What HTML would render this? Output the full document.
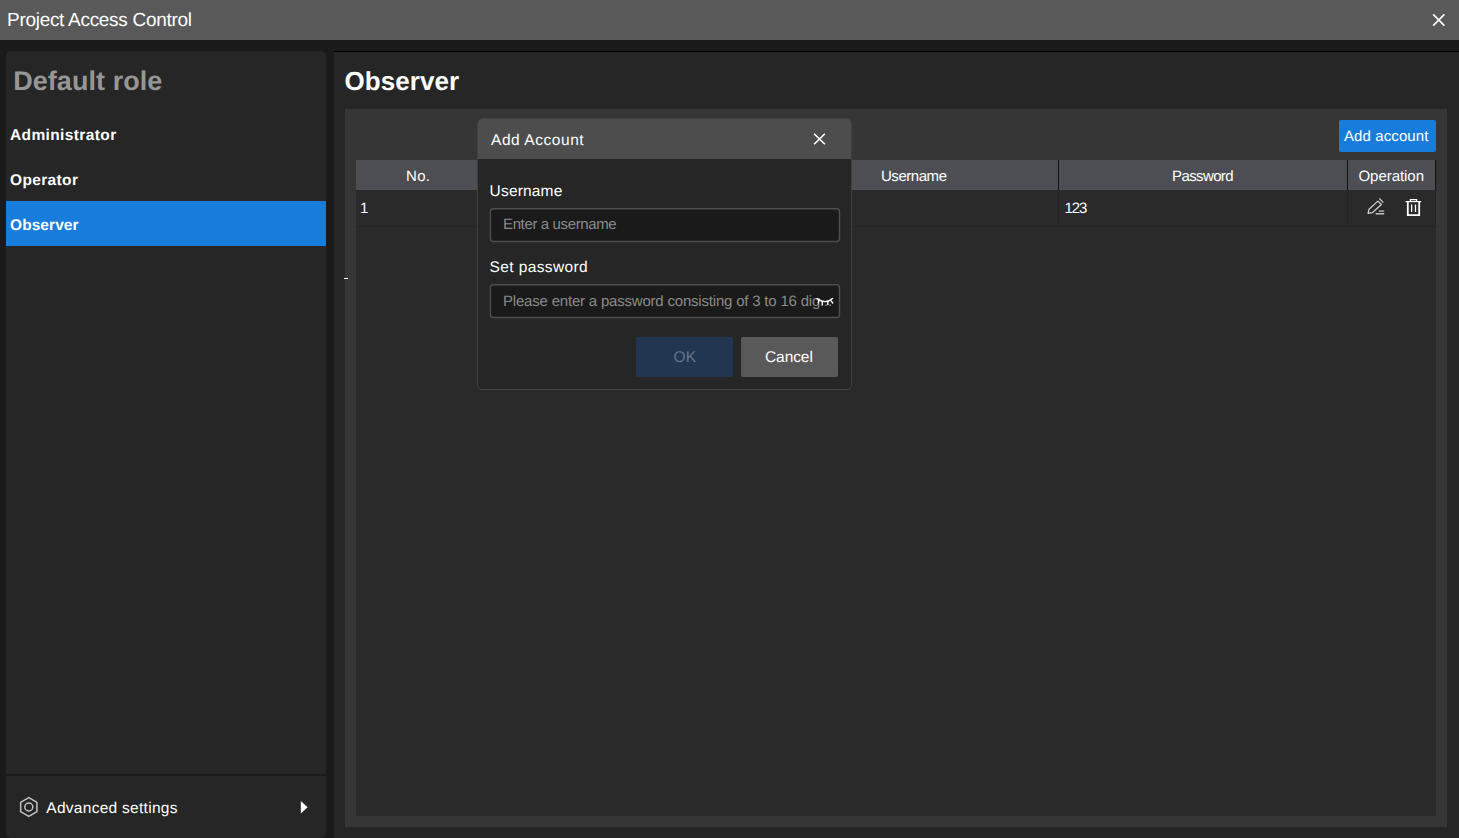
<!DOCTYPE html>
<html lang="en">
<head>
<meta charset="utf-8">
<title>Project Access Control</title>
<style>
*{box-sizing:border-box;margin:0;padding:0}
html,body{width:1459px;height:838px;overflow:hidden;background:#1a1a1a}
body{position:relative;font-family:"Liberation Sans",sans-serif;color:#fff;text-rendering:geometricPrecision}
.abs{position:absolute}
.t{position:absolute;white-space:nowrap;line-height:1}
#titlebar{left:0;top:0;width:1459px;height:40px;background:#595959}
#side{left:6px;top:51px;width:320px;height:787px;background:#262626;border-radius:5px}
#sel{left:6px;top:201px;width:320px;height:45px;background:#177ddc}
#sideline{left:6px;top:774px;width:320px;height:2px;background:#1b1b1b}
#main{left:334px;top:51px;width:1125px;height:787px;background:#262626;border-top:1px solid #000}
#gray{left:345px;top:109px;width:1102px;height:718px;background:#363636}
#tbl{left:356px;top:160px;width:1080px;height:656px;background:#2a2a2a}
#thead{left:356px;top:160px;width:1080px;height:30px;background:#4d4e53}
.vsep{position:absolute;top:160px;width:1px;height:30px;background:#111}
.bsep{position:absolute;top:190px;width:1px;height:36px;background:#242424}
#rowline{left:356px;top:226px;width:1080px;height:1px;background:#242424}
#addbtn{left:1339px;top:120px;width:97px;height:32px;background:#177ddc;border-radius:2px}
#dlg{left:477px;top:118px;width:375px;height:272px;background:#262626;border:1px solid #414141;border-radius:5px;overflow:hidden}
#dlghead{left:0;top:0;width:373px;height:40px;background:#4d4d4d}
#ok{left:636px;top:337px;width:97px;height:40px;background:#223652;border-radius:2px}
#cancel{left:741px;top:337px;width:97px;height:40px;background:#595959;border-radius:2px}
</style>
</head>
<body>
<header>
<div id="titlebar" class="abs"></div>
<div id="t_title" class="t" style="left:7px;top:11px;font-size:19px;letter-spacing:-0.29px">Project Access Control</div>
<svg class="abs" style="left:1430.7px;top:12px" width="16" height="16" viewBox="0 0 16 16"><path d="M2.2 2.4 L13.4 13.6 M13.4 2.4 L2.2 13.6" stroke="#fff" stroke-width="1.6" fill="none"/></svg>
</header>

<aside>
<div id="side" class="abs"></div>
<div id="t_def" class="t" style="left:13.2px;top:68px;font-size:27px;font-weight:bold;color:#969696;letter-spacing:0.06px">Default role</div>
<div id="t_adm" class="t" style="left:10px;top:128px;font-size:15.5px;font-weight:bold;letter-spacing:0.38px">Administrator</div>
<div id="t_op" class="t" style="left:10px;top:173px;font-size:15.5px;font-weight:bold;letter-spacing:0.36px">Operator</div>
<div id="sel" class="abs"></div>
<div id="t_obs" class="t" style="left:10px;top:218px;font-size:15.5px;font-weight:bold;letter-spacing:0.07px">Observer</div>
<div id="sideline" class="abs"></div>
<svg class="abs" style="left:18px;top:795px" width="22" height="24" viewBox="0 0 22 24"><path d="M10.8 2.6 L18.95 7.3 L18.95 16.7 L10.8 21.4 L2.65 16.7 L2.65 7.3 Z" stroke="#c2c2c2" stroke-width="1.5" fill="none" stroke-linejoin="round"/><circle cx="10.8" cy="12" r="4" stroke="#c2c2c2" stroke-width="1.5" fill="none"/></svg>
<div id="t_adv" class="t" style="left:46.3px;top:801px;font-size:15.5px;letter-spacing:0.28px">Advanced settings</div>
<svg class="abs" style="left:300px;top:800px" width="9" height="14" viewBox="0 0 9 14"><path d="M0.8 1 L7.6 7.3 L0.8 13.6 Z" fill="#fff"/></svg>
</aside>

<main>
<div id="main" class="abs"></div>
<div id="t_h" class="t" style="left:344.4px;top:68px;font-size:26px;font-weight:bold;letter-spacing:0.08px">Observer</div>
<div id="gray" class="abs"></div>
<div class="abs" style="left:344px;top:278px;width:4px;height:1px;background:#fff"></div>
<div id="addbtn" class="abs"></div>
<div id="t_add" class="t" style="left:1344px;top:129px;font-size:15px;letter-spacing:0.1px">Add account</div>
<div id="tbl" class="abs"></div>
<div id="thead" class="abs"></div>
<div class="vsep" style="left:1058px"></div>
<div class="vsep" style="left:1347px"></div>
<div class="vsep" style="left:1435px"></div>
<div class="bsep" style="left:1058px"></div>
<div class="bsep" style="left:1347px"></div>
<div class="bsep" style="left:1435px"></div>
<div id="rowline" class="abs"></div>
<div id="t_no" class="t" style="left:406px;top:169px;font-size:15px;letter-spacing:0.3px">No.</div>
<div id="t_un" class="t" style="left:881px;top:169px;font-size:15px;letter-spacing:-0.46px">Username</div>
<div id="t_pw" class="t" style="left:1172px;top:169px;font-size:15px;letter-spacing:-0.61px">Password</div>
<div id="t_opr" class="t" style="left:1358.5px;top:169px;font-size:15px;letter-spacing:-0.05px">Operation</div>
<div id="t_1" class="t" style="left:360px;top:201px;font-size:15px">1</div>
<div id="t_123" class="t" style="left:1064.5px;top:201px;font-size:15px;letter-spacing:-1.1px">123</div>

<svg class="abs" style="left:1365px;top:196px" width="22" height="22" viewBox="0 0 22 22"><g stroke="#d2d2d2" stroke-width="1.2" fill="none" stroke-linejoin="round" stroke-linecap="butt"><path d="M3 17.4 L4 13.2 L12.9 5.1 L16.4 8.5 L7.3 16.7 Z"/><path d="M14.3 2.5 L18.3 6.7"/><path d="M13.8 15.1 H19.2"/><path d="M10.6 17.8 H19.2" stroke-width="1.4"/></g></svg>
<svg class="abs" style="left:1404px;top:197px" width="20" height="22" viewBox="0 0 20 22"><g stroke="#fff" fill="none"><path d="M1.6 4.6 H17.2" stroke-width="1.2"/><path d="M6.4 4.2 V2.6 H12.6 V4.2" stroke-width="1.3"/><path d="M3.8 5 V18.2 H15.2 V5" stroke-width="1.8"/><path d="M7.6 7.6 V15 M11.5 7.6 V15" stroke-width="1.3"/></g></svg>
</main>

<section role="dialog" aria-label="Add Account">
<div id="dlg" class="abs"><div id="dlghead" class="abs"></div></div>
<div id="t_dt" class="t" style="left:491px;top:133px;font-size:15.5px;letter-spacing:0.56px">Add Account</div>
<svg class="abs" style="left:811px;top:131px" width="16" height="16" viewBox="0 0 16 16"><path d="M3.1 2.7 L13.9 13.3 M13.9 2.7 L3.1 13.3" stroke="#fff" stroke-width="1.6" fill="none"/></svg>
<div id="t_lu" class="t" style="left:489.6px;top:184px;font-size:15.5px;letter-spacing:0.17px">Username</div>
<svg class="abs" style="left:486px;top:204px" width="360" height="42"><rect x="4.4" y="4.7" width="349.1" height="32.8" rx="3" fill="#1a1a1a" stroke="#4e4e4e" stroke-width="1.4"/></svg>
<div id="t_pu" class="t" style="left:503px;top:217px;font-size:15px;color:#8a8a8a;letter-spacing:-0.37px">Enter a username</div>
<div id="t_lp" class="t" style="left:489.6px;top:260px;font-size:15.5px;letter-spacing:0.38px">Set password</div>
<svg class="abs" style="left:486px;top:280px" width="360" height="42"><rect x="4.4" y="4.7" width="349.1" height="32.8" rx="3" fill="#1a1a1a" stroke="#4e4e4e" stroke-width="1.4"/></svg>
<div id="t_pp" class="t" style="left:503px;top:294px;font-size:15px;color:#8a8a8a;letter-spacing:-0.2px">Please enter a password consisting of 3 to 16 dig...</div>
<svg class="abs" style="left:815px;top:295.6px" width="20" height="12" viewBox="0 0 20 12"><g stroke="#fff" stroke-width="1.4" fill="none" stroke-linecap="round"><path d="M1.9 2.7 Q10.6 8.7 17.5 2.4"/><path d="M7.3 5.6 L7.3 8.4 M12.8 5.4 L12.8 8.4 M3.7 4.2 L3.3 6.8 M15.9 4.6 L17.7 7"/></g></svg>
<div id="ok" class="abs"></div>
<div id="t_ok" class="t" style="left:673.5px;top:350px;font-size:15.5px;color:#60758f;letter-spacing:0.2px">OK</div>
<div id="cancel" class="abs"></div>
<div id="t_cancel" class="t" style="left:765px;top:350px;font-size:15.5px;letter-spacing:-0.08px">Cancel</div>
</section>
</body>
</html>
